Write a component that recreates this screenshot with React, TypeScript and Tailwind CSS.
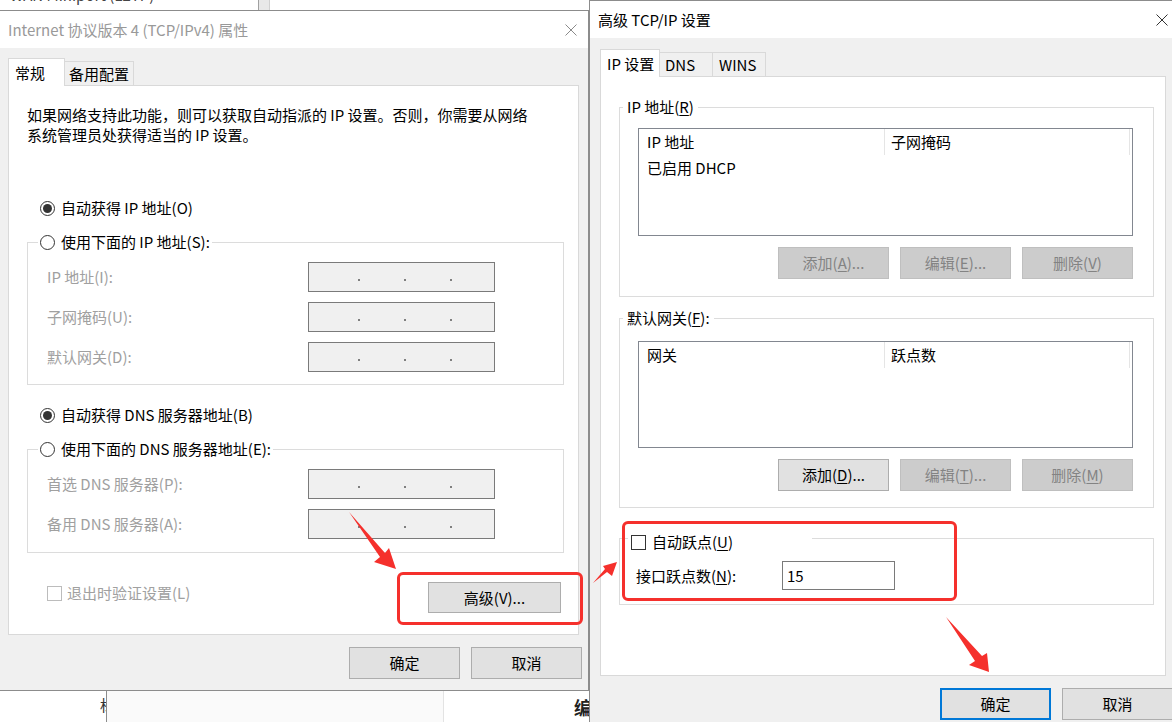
import React from 'react';

const font = "font-['Noto_Sans_CJK_SC',sans-serif]";

function CloseX({ color }: { color: string }) {
  return (
    <svg width="12" height="12" viewBox="0 0 12 12" className="shrink-0">
      <path d="M0.5 0.5 L11.5 11.5 M11.5 0.5 L0.5 11.5" stroke={color} strokeWidth="1" fill="none" />
    </svg>
  );
}

function Radio({ checked }: { checked?: boolean }) {
  return (
    <span className="w-[15px] h-[15px] rounded-full border border-[#333333] bg-white flex items-center justify-center shrink-0">
      {checked && <span className="w-[9px] h-[9px] rounded-full bg-[#333333]" />}
    </span>
  );
}

function U({ children }: { children: React.ReactNode }) {
  return <span className="underline underline-offset-[2px] decoration-1">{children}</span>;
}

function IpField() {
  return (
    <div className="w-[187px] h-[30px] border border-[#7a7a7a] bg-[#f0f0f0] flex items-center pl-[49px] gap-[44px]">
      <span className="w-[2px] h-[2px] bg-[#7f7f7f] mt-[5px]" />
      <span className="w-[2px] h-[2px] bg-[#7f7f7f] mt-[5px]" />
      <span className="w-[2px] h-[2px] bg-[#7f7f7f] mt-[5px]" />
    </div>
  );
}

function Btn({
  children,
  disabled,
  focused,
  className = '',
}: {
  children: React.ReactNode;
  disabled?: boolean;
  focused?: boolean;
  className?: string;
}) {
  const look = disabled
    ? 'bg-[#cccccc] border border-[#bfbfbf] text-[#838383]'
    : focused
    ? 'bg-[#e1e1e1] border-2 border-[#0078d7] text-black'
    : 'bg-[#e1e1e1] border border-[#adadad] text-black';
  return (
    <div className={`w-[111px] h-[32px] flex items-center justify-center shrink-0 ${look} ${className}`}>
      {children}
    </div>
  );
}

function FieldRow({ label }: { label: string }) {
  return (
    <div className="flex items-center h-[30px]">
      <span className="w-[261px] text-[#a0a0a0] whitespace-nowrap">{label}</span>
      <IpField />
    </div>
  );
}

function ListView({ col1, col2, row, tall }: { col1: string; col2: string; row?: string; tall?: boolean }) {
  return (
    <div className={`w-[495px] border border-[#828790] bg-white ${tall ? 'h-[108px]' : 'h-[107px]'}`}>
      <div className="flex h-[26px]">
        <div className="w-[246px] pl-[8px] flex items-center border-r border-[#e5e5e5]">{col1}</div>
        <div className="w-[245px] pl-[6px] flex items-center border-r border-[#e5e5e5]">{col2}</div>
      </div>
      {row && <div className="pl-[8px] h-[26px] flex items-center">{row}</div>}
    </div>
  );
}

function LeftDialog() {
  return (
    <div className="absolute left-0 top-[10px] w-[589px] h-[681px] border border-l-0 border-[#8c8c8c] bg-[#f0f0f0] flex flex-col">
      <div className="h-[37px] bg-white flex items-center justify-between pl-[8px] pr-[11px] text-[#999999]">
        <span className="whitespace-nowrap">Internet 协议版本 4 (TCP/IPv4) 属性</span>
        <CloseX color="#8a8a8a" />
      </div>
      <div className="pl-[8px] pt-[10px]">
        <div className="flex items-end h-[28px]">
          <div className="h-[28px] w-[57px] bg-white border border-b-0 border-[#d9d9d9] pl-[6px] flex items-center relative z-10">
            常规
          </div>
          <div className="h-[25px] w-[69px] bg-[#f0f0f0] border border-l-0 border-[#d9d9d9] pl-[4px] flex items-center">
            备用配置
          </div>
        </div>
        <div className="w-[571px] h-[550px] -mt-px border border-[#d9d9d9] bg-white pl-[18px] pt-[19px]">
          <p className="whitespace-nowrap">
            如果网络支持此功能，则可以获取自动指派的 IP 设置。否则，你需要从网络
            <br />
            系统管理员处获得适当的 IP 设置。
          </p>

          <div className="mt-[53px] ml-[13px] flex items-center gap-[6px] h-[20px]">
            <Radio checked />
            <span>自动获得 IP 地址(O)</span>
          </div>

          <fieldset className="mt-[14px] w-[537px] border border-[#dcdcdc]">
            <legend className="ml-[10px] pl-[2px] pr-[2px]">
              <span className="flex items-center gap-[6px] h-[20px]">
                <Radio />
                <span>使用下面的 IP 地址(S):</span>
              </span>
            </legend>
            <div className="pl-[19px] pt-[10px] pb-[12px] flex flex-col gap-[10px]">
              <FieldRow label="IP 地址(I):" />
              <FieldRow label="子网掩码(U):" />
              <FieldRow label="默认网关(D):" />
            </div>
          </fieldset>

          <div className="mt-[20px] ml-[13px] flex items-center gap-[6px] h-[20px]">
            <Radio checked />
            <span>自动获得 DNS 服务器地址(B)</span>
          </div>

          <fieldset className="mt-[14px] w-[537px] border border-[#dcdcdc]">
            <legend className="ml-[10px] pl-[2px] pr-[2px]">
              <span className="flex items-center gap-[6px] h-[20px]">
                <Radio />
                <span>使用下面的 DNS 服务器地址(E):</span>
              </span>
            </legend>
            <div className="pl-[19px] pt-[10px] pb-[13px] flex flex-col gap-[10px]">
              <FieldRow label="首选 DNS 服务器(P):" />
              <FieldRow label="备用 DNS 服务器(A):" />
            </div>
          </fieldset>

          <div className="mt-[29px] w-[537px] flex items-start justify-between pl-[20px] pr-[3px]">
            <div className="flex items-center gap-[5px] h-[20px] mt-[1px]">
              <span className="w-[15px] h-[15px] border border-[#bcbcbc] bg-white" />
              <span className="text-[#a0a0a0]">退出时验证设置(L)</span>
            </div>
            <div className="w-[133px] h-[31px] bg-[#e1e1e1] border border-[#adadad] flex items-center justify-center">
              高级(V)...
            </div>
          </div>
        </div>
        <div className="flex justify-end gap-[11px] mt-[12px] pr-[6px]">
          <Btn>确定</Btn>
          <Btn>取消</Btn>
        </div>
      </div>
    </div>
  );
}

function RightDialog() {
  return (
    <div className="absolute left-[589px] top-0 w-[600px] h-[740px] border border-[#8c8c8c] bg-[#f0f0f0] flex flex-col">
      <div className="h-[37px] bg-white flex items-center justify-between pl-[8px] pr-[20px]">
        <span className="whitespace-nowrap">高级 TCP/IP 设置</span>
        <CloseX color="#333333" />
      </div>
      <div className="pl-[10px] pt-[11px]">
        <div className="flex items-end h-[28px]">
          <div className="h-[28px] w-[60px] bg-white border border-b-0 border-[#d9d9d9] pl-[6px] flex items-center relative z-10 whitespace-nowrap">
            IP 设置
          </div>
          <div className="h-[25px] w-[53px] bg-[#f0f0f0] border border-l-0 border-[#d9d9d9] pl-[5px] flex items-center">
            DNS
          </div>
          <div className="h-[25px] w-[53px] bg-[#f0f0f0] border border-l-0 border-[#d9d9d9] pl-[6px] flex items-center">
            WINS
          </div>
        </div>
        <div className="w-[566px] h-[600px] -mt-px border border-[#d9d9d9] bg-white pl-[18px] pt-[20px]">
          <fieldset className="w-[535px] border border-[#dcdcdc]">
            <legend className="ml-[3px] px-[4px] h-[20px]">
              IP 地址(<U>R</U>)
            </legend>
            <div className="pl-[18px] pt-[11px] pb-[17px]">
              <ListView col1="IP 地址" col2="子网掩码" row="已启用 DHCP" tall />
              <div className="w-[495px] flex justify-end gap-[11px] mt-[11px]">
                <Btn disabled>
                  <span>添加(<U>A</U>)...</span>
                </Btn>
                <Btn disabled>
                  <span>编辑(<U>E</U>)...</span>
                </Btn>
                <Btn disabled>
                  <span>删除(<U>V</U>)</span>
                </Btn>
              </div>
            </div>
          </fieldset>

          <fieldset className="mt-[11px] w-[535px] border border-[#dcdcdc]">
            <legend className="ml-[3px] px-[4px] h-[20px]">
              默认网关(<U>F</U>):
            </legend>
            <div className="pl-[18px] pt-[13px] pb-[16px]">
              <ListView col1="网关" col2="跃点数" />
              <div className="w-[495px] flex justify-end gap-[11px] mt-[11px]">
                <Btn>
                  <span>添加(<U>D</U>)...</span>
                </Btn>
                <Btn disabled>
                  <span>编辑(<U>T</U>)...</span>
                </Btn>
                <Btn disabled>
                  <span>删除(<U>M</U>)</span>
                </Btn>
              </div>
            </div>
          </fieldset>

          <fieldset className="mt-[16px] w-[535px] border border-[#dcdcdc]">
            <legend className="ml-[8px] pt-[8px] w-[184px]">
              <span className="flex items-center gap-[6px] h-[20px] pl-[3px]">
                <span className="w-[15px] h-[15px] border border-[#333333] bg-white shrink-0" />
                <span>
                  自动跃点(<U>U</U>)
                </span>
              </span>
            </legend>
            <div className="pl-[16px] pt-[9px] pb-[14px] flex items-center">
              <span className="w-[146px] whitespace-nowrap">
                接口跃点数(<U>N</U>):
              </span>
              <div className="w-[113px] h-[29px] border border-[#7a7a7a] bg-white pl-[4px] flex items-center">
                15
              </div>
            </div>
          </fieldset>
        </div>
        <div className="flex justify-end gap-[11px] mt-[12px] pr-[15px]">
          <Btn focused>确定</Btn>
          <Btn>取消</Btn>
        </div>
      </div>
    </div>
  );
}

function Annotations() {
  return (
    <>
      <div className="absolute left-[397px] top-[572px] w-[186px] h-[53px] border-[3px] border-[#f5302c] rounded-[6px] pointer-events-none" />
      <div className="absolute left-[622px] top-[521px] w-[335px] h-[80px] border-[3px] border-[#f5302c] rounded-[6px] pointer-events-none" />
      <svg className="absolute inset-0 pointer-events-none" width="1172" height="722" viewBox="0 0 1172 722">
        <polygon points="349,512 385,553 389,548 396,569 374,562 380,557" fill="#f5302c" />
        <polygon points="593,583 607,572 612,576 617,562 603,566 605,569" fill="#f5302c" />
        <polygon points="946,617 982,656 987,653 989,672 969,665 975,661" fill="#f5302c" />
      </svg>
    </>
  );
}

export default function App() {
  return (
    <div className={`relative w-[1172px] h-[722px] overflow-hidden bg-white text-[15px] leading-[20px] text-black ${font}`}>
      {/* window behind, top edge */}
      <div className="absolute left-0 top-0 w-[590px] h-[10px] overflow-hidden flex bg-white">
        <div className="w-[259px] h-full border-r border-[#a0a0a0] relative overflow-hidden">
          <span className="absolute left-[10px] top-[-15px] whitespace-nowrap text-[#444444]">WAN Miniport (L2TP)</span>
        </div>
        <div className="w-[11px] h-full bg-[#e8e8e8] border-r border-[#d0d0d0]" />
      </div>

      {/* window behind, bottom edge */}
      <div className="absolute left-0 top-[691px] w-[590px] h-[31px] flex overflow-hidden">
        <div className="w-[107px] h-full bg-white border-r border-[#8c8c8c] relative overflow-hidden">
          <span className="absolute right-[-9px] top-[4px] text-[#333333]">标</span>
        </div>
        <div className="w-[337px] h-full bg-[#fafafa] border-r border-[#e3e3e3]" />
        <div className="flex-1 h-full bg-white relative overflow-hidden">
          <span className="absolute left-[130px] top-[6px] font-bold text-[#222222] text-[18px]">编</span>
        </div>
      </div>

      <LeftDialog />
      <RightDialog />
      <Annotations />
    </div>
  );
}
